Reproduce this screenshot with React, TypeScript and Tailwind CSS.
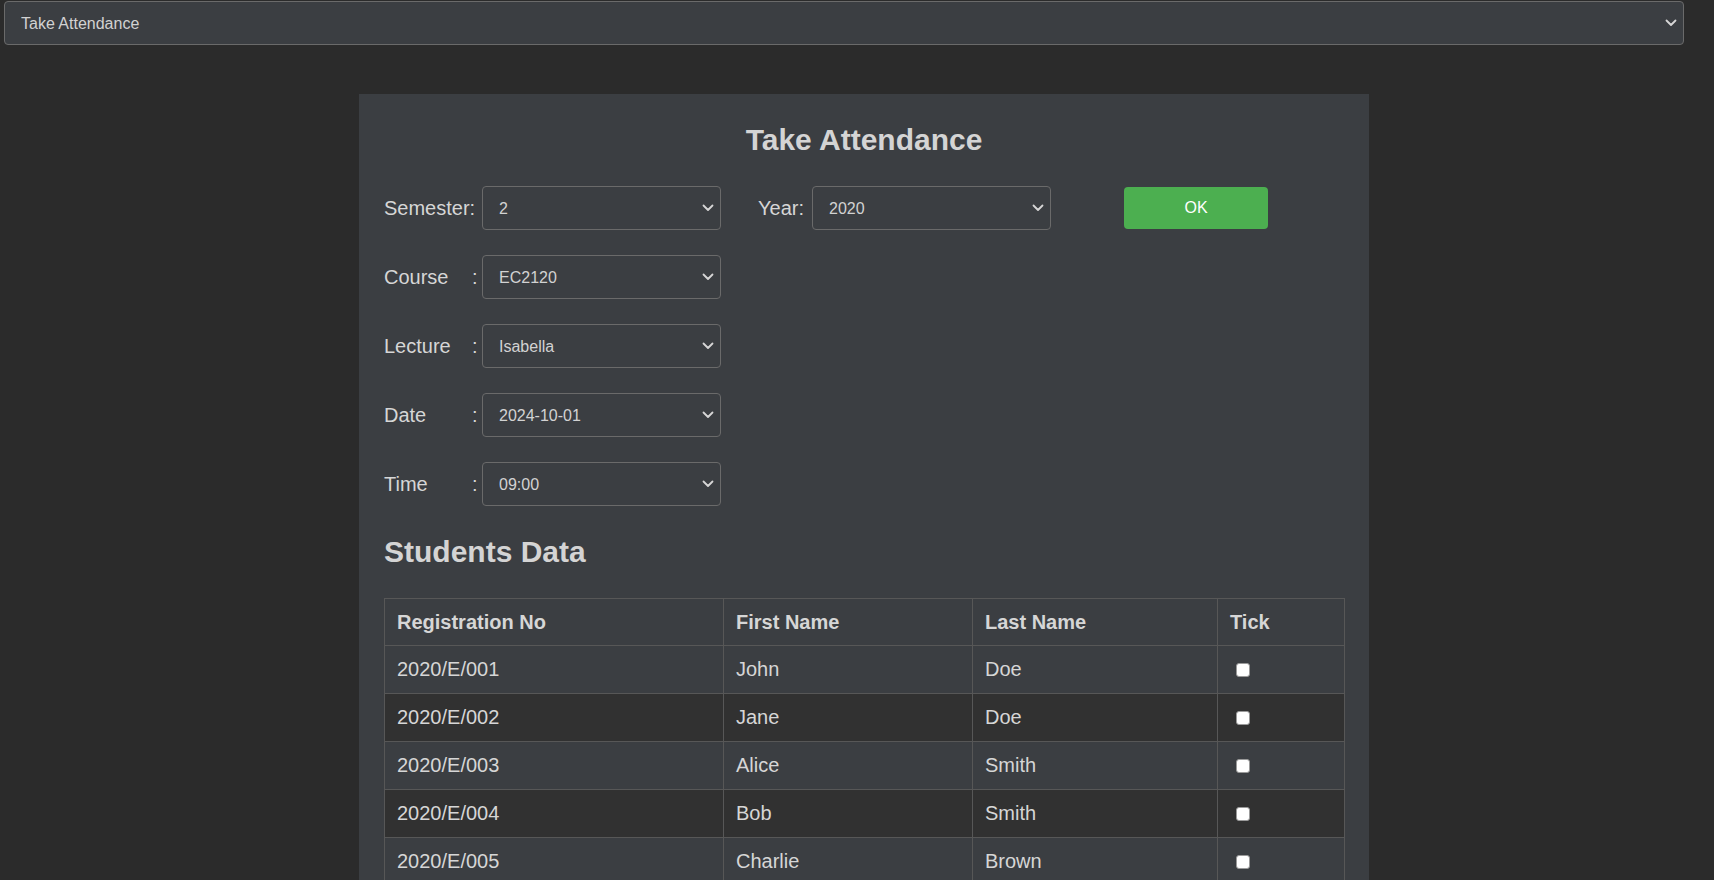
import React from "react";

function Chevron({ className = "" }: { className?: string }) {
  return (
    <svg
      className={className}
      width="12"
      height="8"
      viewBox="0 0 12 8"
      fill="none"
      stroke="currentColor"
      strokeWidth="1.8"
      strokeLinecap="round"
      strokeLinejoin="round"
    >
      <path d="M1.5 1.5 L6 6 L10.5 1.5" />
    </svg>
  );
}

function Select({ value, className = "" }: { value: string; className?: string }) {
  return (
    <div className={"relative h-[44px] " + className}>
      <select
        defaultValue={value}
        className="h-full w-full appearance-none rounded-[4px] border border-[#6a6a6a] bg-[#3b3e42] pl-[16px] pt-[2px] text-[16px] text-[#d2d2d2] outline-none"
      >
        <option value={value}>{value}</option>
      </select>
      <Chevron className="pointer-events-none absolute right-[7px] top-1/2 -translate-y-1/2 text-[#d6d6d6]" />
    </div>
  );
}

const students = [
  ["2020/E/001", "John", "Doe"],
  ["2020/E/002", "Jane", "Doe"],
  ["2020/E/003", "Alice", "Smith"],
  ["2020/E/004", "Bob", "Smith"],
  ["2020/E/005", "Charlie", "Brown"],
];

function FieldRow({ label, value }: { label: string; value: string }) {
  return (
    <div className="mt-[25px] flex h-[44px] items-center text-[20px]">
      <span className="w-[88px]">{label}</span>
      <span className="w-[10px]">:</span>
      <Select value={value} className="w-[239px]" />
    </div>
  );
}

export default function App() {
  return (
    <div className="min-h-screen overflow-hidden bg-[#2b2b2b] font-['Liberation_Sans',Arial,sans-serif] text-[#d6d6d6]">
      <div className="ml-[4px] mt-[1px] w-[98%]">
        <Select value="Take Attendance" className="w-full" />
      </div>

      <div className="ml-[359px] mt-[49px] w-[1010px] bg-[#3b3e42] px-[25px] pb-[25px] pt-[29px]">
        <h2 className="text-center text-[30px] font-bold leading-[34px] text-[#d4d4d4]">
          Take Attendance
        </h2>

        <div className="mt-[29px] flex h-[44px] items-center text-[20px]">
          <span className="w-[98px]">Semester:</span>
          <Select value="2" className="w-[239px]" />
          <span className="ml-[37px] w-[54px]">Year:</span>
          <Select value="2020" className="w-[239px]" />
          <button className="ml-[73px] h-[42px] w-[144px] rounded-[4px] bg-[#4caf50] text-[16px] text-white">
            OK
          </button>
        </div>

        <FieldRow label="Course" value="EC2120" />
        <FieldRow label="Lecture" value="Isabella" />
        <FieldRow label="Date" value="2024-10-01" />
        <FieldRow label="Time" value="09:00" />

        <h2 className="mt-[29px] text-[30px] font-bold leading-[34px] text-[#d4d4d4]">
          Students Data
        </h2>

        <table className="mt-[29px] w-[960px] table-fixed border-collapse text-[20px]">
          <thead>
            <tr>
              <th className="w-[339px] border border-[#575757] px-[12px] py-[12px] text-left font-bold leading-[22px]">
                Registration No
              </th>
              <th className="w-[249px] border border-[#575757] px-[12px] py-[12px] text-left font-bold leading-[22px]">
                First Name
              </th>
              <th className="w-[245px] border border-[#575757] px-[12px] py-[12px] text-left font-bold leading-[22px]">
                Last Name
              </th>
              <th className="w-[127px] border border-[#575757] px-[12px] py-[12px] text-left font-bold leading-[22px]">
                Tick
              </th>
            </tr>
          </thead>
          <tbody>
            {students.map((s, i) => (
              <tr key={s[0]} className={i % 2 === 1 ? "bg-[#313131]" : ""}>
                <td className="border border-[#575757] px-[12px] py-[12px] leading-[23px]">{s[0]}</td>
                <td className="border border-[#575757] px-[12px] py-[12px] leading-[23px]">{s[1]}</td>
                <td className="border border-[#575757] px-[12px] py-[12px] leading-[23px]">{s[2]}</td>
                <td className="border border-[#575757] px-[12px] py-[12px] leading-[23px]">
                  <div className="flex h-[23px] items-center">
                    <input
                      type="checkbox"
                      className="m-0 ml-[6px] h-[14px] w-[14px] appearance-none rounded-[3px] border border-[#9a9a9a] bg-white"
                    />
                  </div>
                </td>
              </tr>
            ))}
          </tbody>
        </table>
      </div>
    </div>
  );
}
